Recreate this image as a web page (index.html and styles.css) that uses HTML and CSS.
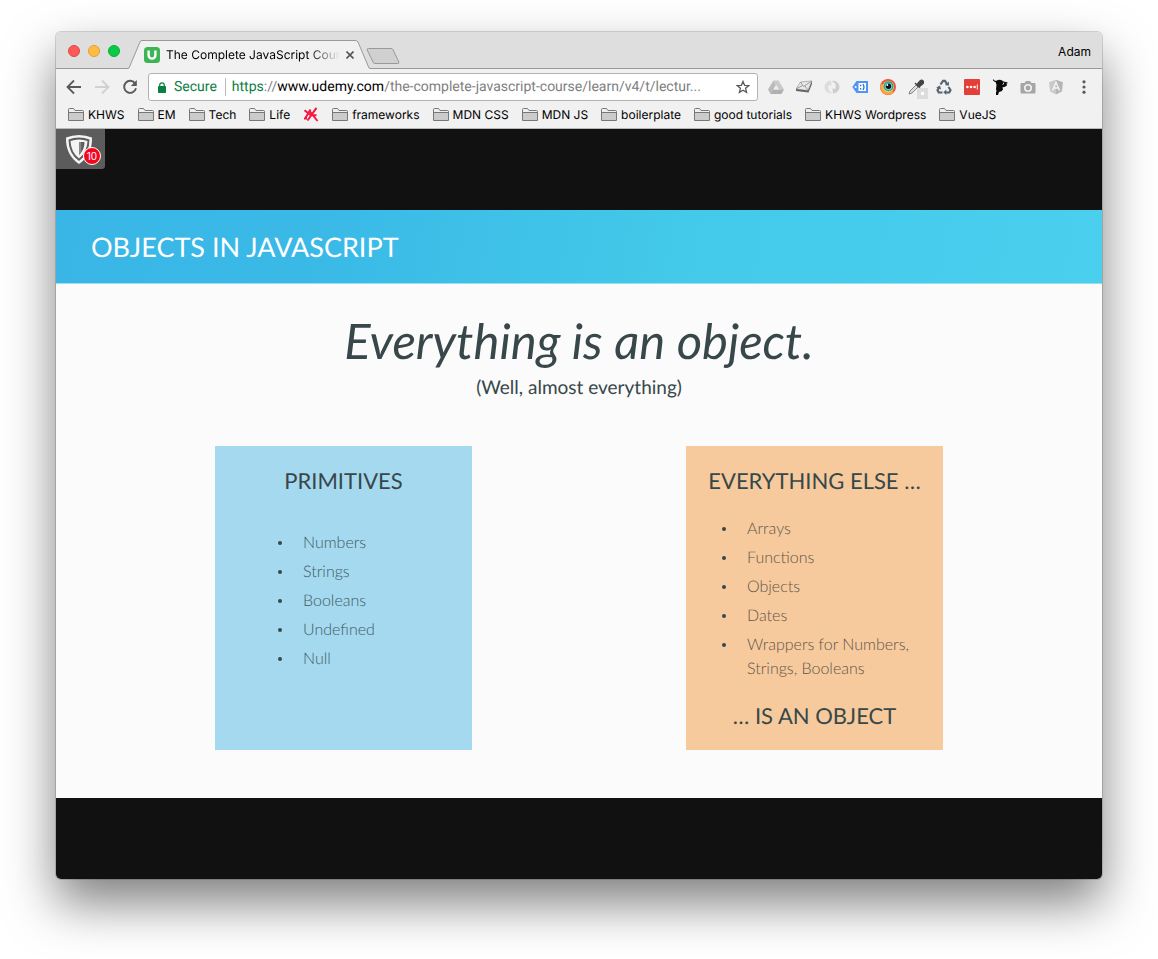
FILE: index.html
```html
<!DOCTYPE html>
<html lang="en">
<head>
<meta charset="utf-8">
<title>The Complete JavaScript Course</title>
<link rel="stylesheet" href="styles.css">
</head>
<body>
<svg class="defs" width="0" height="0" aria-hidden="true">
  <symbol id="folder" viewBox="0 0 16 13">
    <path d="M.5 12.500V1.500q0-1 1-1H5.500l1.500 2h7.500q1 0 1 1v9z" fill="#f0f0f0" stroke="#777"/>
    <path d="M1 5h14v7H1z" fill="#cbcbcb"/>
    <path d="M1 4.500h14" stroke="#777"/>
  </symbol>
</svg>
<div class="window">
  <header class="tabstrip">
    <div class="lights">
      <button class="light red" aria-label="Close window"></button>
      <button class="light amber" aria-label="Minimize window"></button>
      <button class="light green" aria-label="Zoom window"></button>
    </div>
    <div class="tab">
      <svg class="tab-shape" viewBox="0 0 242 29" preserveAspectRatio="none" aria-hidden="true"><path d="M0 28.500L1 28 12 2Q12.500.5 14 .5H227Q229 .5 230 2L241 28l1 .5V29H0z" fill="#f1f1f1"/><path d="M0 28.500L1 28 12 2Q12.500.5 14 .5H227Q229 .5 230 2L241 28l1 .5" fill="none" stroke="#999"/></svg>
      <svg class="favicon" viewBox="0 0 16 16" aria-hidden="true"><rect width="16" height="16" rx="3.500" fill="#3db556"/><path d="M4.600 3.500V8.200a3.400 3.400 0 0 0 6.800 0V3.500" fill="none" stroke="#fff" stroke-width="2.400"/></svg>
      <span class="tab-title">The Complete JavaScript Cour</span>
      <button class="tab-close" aria-label="Close tab"><svg viewBox="0 0 8 8" width="8" height="8"><path d="M.5.5l7 7M7.500.5l-7 7" stroke="#555" stroke-width="1.600"/></svg></button>
    </div>
    <button class="new-tab" aria-label="New tab"><svg viewBox="0 0 34 17" width="34" height="17"><path d="M2.500.5H25q1.500 0 2.200 1.500l5.600 12q.7 1.500-1 1.500H9q-1.500 0-2-1.500L1.200 2Q.6.5 2.500.5z" fill="#d0d0d0" stroke="#999"/></svg></button>
    <button class="profile">Adam</button>
  </header>

  <div class="toolbar">
    <nav class="nav">
      <button aria-label="Back"><svg viewBox="0 0 16 16"><path d="M15 8H2M8 1.500L1.500 8 8 14.500" fill="none" stroke="#5a5a5a" stroke-width="1.800"/></svg></button>
      <button aria-label="Forward"><svg viewBox="0 0 16 16"><path d="M1 8h13M8 1.500L14.500 8 8 14.500" fill="none" stroke="#d0d0d0" stroke-width="1.800"/></svg></button>
      <button aria-label="Reload"><svg viewBox="0 0 16 16"><path d="M13.200 4.500A6 6 0 1 0 14 9.300" fill="none" stroke="#5a5a5a" stroke-width="1.900"/><path d="M14.800 1v6H8.800z" fill="#5a5a5a"/></svg></button>
    </nav>
    <div class="address">
      <svg class="lock" viewBox="0 0 8 11" aria-hidden="true"><rect y="4" width="8" height="7" rx=".8" fill="#0b8043"/><path d="M1.700 4.500V3.200a2.300 2.300 0 0 1 4.600 0v1.300" fill="none" stroke="#0b8043" stroke-width="1.200"/></svg>
      <span class="secure">Secure</span>
      <label class="origin" for="url"><span class="scheme">https</span>://<span class="host">www.udemy.com</span></label>
      <input id="url" class="path" type="text" value="/the-complete-javascript-course/learn/v4/t/lectur...">
      <button class="star" aria-label="Bookmark this page"><svg viewBox="0 0 14 14" width="14" height="14"><path d="M7 1.400l1.600 3.900 4.200.3-3.200 2.700 1 4.100L7 10.200l-3.600 2.200 1-4.100L1.200 5.600l4.200-.3z" fill="none" stroke="#5a5a5a" stroke-width="1.300"/></svg></button>
    </div>
    <div class="extensions">
      <button aria-label="Drive"><svg viewBox="0 0 16 16"><path d="M5.500 1.500h5L16 10.500h-5z" fill="#c9c9c9"/><path d="M5.500 1.500L0 10.500 2.500 15 8 6z" fill="#bbb"/><path d="M5 10.500h11L13.500 15h-11z" fill="#b0b0b0"/><path d="M8 6.500l2.500 4h-5z" fill="#ececec"/></svg></button>
      <button aria-label="Mail checker"><svg viewBox="0 0 16 16"><path d="M4.500 3L16 2 12 11.500 0 10z" fill="#e8e8e8" stroke="#999" stroke-width=".7"/><path d="M4.500 3l3 4.500L16 2M6.500 6.500L0 10M9 7l3 4.500" fill="none" stroke="#888" stroke-width=".8"/><path d="M0 10l12 1.500L16 2v3l-3.500 8.500L0 12z" fill="#666"/></svg></button>
      <button aria-label="Sync"><svg viewBox="0 0 16 16"><path d="M7 1.500C1 2-1.500 8.500 2.500 12.500c2 2 4.500 2 6 1C4 13 3 8.500 5.500 5.500L7.500 7z" fill="#dcdcdc"/><path d="M9 14.500c6-.5 8.500-7 4.500-11-2-2-4.500-2-6-1 4.500.5 5.500 5 3 8L8.500 9z" fill="#cdcdcd"/></svg></button>
      <button aria-label="Tag"><svg viewBox="0 0 16 16"><path d="M4.500 2H16v12H4.500L.3 8z" fill="#4d96f5"/><path d="M6.500 4h7.500v8H6.500z" fill="#fff"/><circle cx="3.700" cy="8" r="1" fill="#fff"/><path d="M8 5.800h1.300v1.500H8zM8 9h1.300v1.500H8z" fill="#2c6fd0"/><path d="M11 5q2 3 0 6" fill="none" stroke="#2c6fd0" stroke-width="1.200"/></svg></button>
      <button aria-label="Eye"><svg viewBox="0 0 16 16"><circle cx="8" cy="8" r="8" fill="#ee5340"/><path d="M.8 4.500A8 8 0 0 0 14 13.200L8 8z" fill="#f9a03c"/><circle cx="8.300" cy="7.600" r="5.800" fill="#f6c571"/><circle cx="8.500" cy="7.300" r="5" fill="#1fa790"/><circle cx="8.500" cy="7.300" r="3.600" fill="#79d6d5"/><circle cx="8.500" cy="7.300" r="2.700" fill="#111"/><circle cx="7.300" cy="6" r=".9" fill="#fff"/></svg></button>
      <button class="picker" aria-label="Color picker"><svg viewBox="0 0 16 16"><path d="M1 15l1-3 6-6 2 2-6 6z" fill="#ddd" stroke="#777" stroke-width=".9"/><path d="M7 4l5 5M9 5.500L12 2q1.800-1.800 3 0t-.5 3L11 8z" fill="#444" stroke="#444" stroke-width="1.400"/></svg><span class="picker-badge"></span></button>
      <button aria-label="Recycle"><svg viewBox="0 0 16 16" fill="none" stroke="#566573" stroke-width="2.200"><path d="M4.500 5.500L7 1.800h2L11 5"/><path d="M12.500 8l2 3-1.200 2.500H9.500"/><path d="M6.500 13.500H2.700L1.500 11 3 8.500"/><path d="M12.900 2.500v4.300L8.800 6zM10.300 10.500v5.500l-3-2.700zM.2 8.600L4 6.500l1.200 4z" fill="#566573" stroke="none"/></svg></button>
      <button aria-label="Password manager"><svg viewBox="0 0 16 16"><rect width="16" height="16" rx="1" fill="#e33e38"/><circle cx="3.400" cy="8" r="1.300" fill="#fff"/><circle cx="7" cy="8" r="1.300" fill="#fff"/><circle cx="10.600" cy="8" r="1.300" fill="#fff"/><path d="M13.300 5.500v5" stroke="#fff"/></svg></button>
      <button aria-label="Ninja"><svg viewBox="0 0 16 16" fill="#0b0b0b"><ellipse cx="7.500" cy="3.700" rx="3.600" ry="3"/><path d="M1 0l1.500 1.500L5 2v1.500L3 3 1 1.500z"/><path d="M10 2.600L15.500 4" stroke="#0b0b0b" stroke-width="1.200"/><path d="M4.500 6h5l2-.5.500-1.500h2.500l.5 2.500-2.500 1.500-2 .3.500 2.200-1.500 1.800-2.500.7L6 16H4v-2.500l.5-1.500-.5-2z"/></svg></button>
      <button aria-label="Screenshot"><svg viewBox="0 0 16 16"><path d="M1.500 4H4.500L6 2h4l1.500 2h3Q15.500 4 15.500 5v8.500q0 1-1 1h-13q-1 0-1-1V5q0-1 1-1z" fill="#a5a5a5"/><circle cx="8" cy="9" r="3.200" fill="none" stroke="#f1f1f1" stroke-width="1.600"/></svg></button>
      <button aria-label="Angular"><svg viewBox="0 0 16 16"><path d="M8 .8l7 2.400-1.100 9.300L8 15.500z" fill="#b5b5b5"/><path d="M8 .8L1 3.200l1.100 9.300L8 15.500z" fill="#c9c9c9"/><path d="M4.500 11.500L8 3.300l3.500 8.200M5.500 9h5" fill="none" stroke="#f3f3f3" stroke-width="1.500"/></svg></button>
      <button aria-label="Menu"><svg viewBox="0 0 16 16" fill="#5a5a5a"><circle cx="8" cy="2.800" r="1.600"/><circle cx="8" cy="8" r="1.600"/><circle cx="8" cy="13.200" r="1.600"/></svg></button>
    </div>
  </div>

  <nav class="bookmarks" aria-label="Bookmarks">
    <a href="#"><svg class="folder"><use href="#folder"/></svg>KHWS</a>
    <a href="#"><svg class="folder"><use href="#folder"/></svg>EM</a>
    <a href="#"><svg class="folder"><use href="#folder"/></svg>Tech</a>
    <a href="#"><svg class="folder"><use href="#folder"/></svg>Life</a>
    <a href="#" aria-label="XX"><svg width="16" height="15" viewBox="0 0 16 15"><path d="M1.500 3.200L7.500 8M7.500 2.500L2 11.800M7 4.500l7.500 9.500M13.500.8L4.500 13.500M8.500 8l5 .3M1 11.500h3" fill="none" stroke="#f5183e" stroke-width="2"/></svg></a>
    <a href="#"><svg class="folder"><use href="#folder"/></svg>frameworks</a>
    <a href="#"><svg class="folder"><use href="#folder"/></svg>MDN CSS</a>
    <a href="#"><svg class="folder"><use href="#folder"/></svg>MDN JS</a>
    <a href="#"><svg class="folder"><use href="#folder"/></svg>boilerplate</a>
    <a href="#"><svg class="folder"><use href="#folder"/></svg>good tutorials</a>
    <a href="#"><svg class="folder"><use href="#folder"/></svg>KHWS Wordpress</a>
    <a href="#"><svg class="folder"><use href="#folder"/></svg>VueJS</a>
  </nav>

  <main class="viewer">
    <button class="shield" aria-label="Blocked trackers">
      <svg viewBox="0 0 28 31" width="28" height="31" aria-hidden="true"><path d="M14 1Q21 1 27 3.500 27.500 21 14 30 .5 21 1 3.500 7 1 14 1z" fill="#f4f4f4"/><path d="M14 3.500q5.500 0 10.500 2Q24.500 19.500 14 27 3.500 19.500 3.500 5.500q5-2 10.500-2z" fill="#5c5c5c"/><path d="M14 5.500q4.500 0 8.500 1.500Q22 18.500 14 24.500 6 18.500 5.500 7 9.500 5.500 14 5.500z" fill="#f4f4f4"/><path d="M14 8h5.500Q19.500 16 14 21z" fill="#5c5c5c"/><path d="M14 8h2.200v10L14 21z" fill="#888"/></svg>
      <span class="count">10</span>
    </button>
    <article class="slide">
      <h1 class="slide-title">OBJECTS IN JAVASCRIPT</h1>
      <p class="statement">Everything is an object.</p>
      <p class="aside">(Well, almost everything)</p>
      <div class="cards">
        <section class="card primitives">
          <h2>PRIMITIVES</h2>
          <ul>
            <li>Numbers</li>
            <li>Strings</li>
            <li>Booleans</li>
            <li>Undefined</li>
            <li>Null</li>
          </ul>
        </section>
        <section class="card others">
          <h2>EVERYTHING ELSE …</h2>
          <ul>
            <li>Arrays</li>
            <li>Functions</li>
            <li>Objects</li>
            <li>Dates</li>
            <li>Wrappers for Numbers, Strings, Booleans</li>
          </ul>
          <p class="closing">… IS AN OBJECT</p>
        </section>
      </div>
    </article>
  </main>
</div>
</body>
</html>
```
FILE: styles.css
```css
* { box-sizing: border-box; }
body {
  margin: 0;
  min-height: 100vh;
  padding: 32px 56px 80px;
  display: flex;
  background: #fff;
  font-family: Inter, Roboto, "Liberation Sans", sans-serif;
  text-rendering: geometricPrecision;
  color: #000;
}
button {
  padding: 0;
  border: 0;
  background: none;
  font: inherit;
  color: inherit;
}
h1, h2, p, ul { margin: 0; padding: 0; font-weight: 400; }
svg { display: block; flex: none; }
.defs { position: absolute; }

.window {
  flex: 1;
  min-width: 0;
  display: flex;
  flex-direction: column;
  border-radius: 5px;
  overflow: hidden;
  background: #f1f1f1;
  box-shadow: 0 0 0 1px rgba(0, 0, 0, .15), 0 24px 50px rgba(0, 0, 0, .5);
}

.tabstrip {
  display: flex;
  align-items: flex-end;
  height: 37px;
  padding: 0 11px 0 12px;
  background: #dedede;
  box-shadow: inset 0 -1px #999;
}
.lights { display: flex; gap: 8px; padding-bottom: 12px; }
.light { width: 12px; height: 12px; border-radius: 50%; }
.red { background: #fc5b57; border: 1px solid #e2463f; }
.amber { background: #febc40; border: 1px solid #e0a032; }
.green { background: #07cb46; border: 1px solid #10ab35; }
.tab {
  position: relative;
  display: flex;
  align-items: center;
  width: 242px;
  height: 29px;
  margin-left: 8px;
  padding: 0 17px 0 16px;
}
.tab-shape { position: absolute; inset: 0; width: 100%; height: 100%; }
.favicon, .tab-title, .tab-close { position: relative; }
.favicon { width: 16px; height: 16px; }
.tab-title {
  flex: 1;
  margin: 0 6px;
  font-size: 12px;
  line-height: 16px;
  white-space: nowrap;
  -webkit-mask-image: linear-gradient(to left, transparent, #000 32px);
  mask-image: linear-gradient(to left, transparent, #000 32px);
}
.new-tab { margin: 0 auto 4px -4px; }
.profile { padding-bottom: 9px; font-size: 12px; line-height: 16px; }

.toolbar {
  display: flex;
  align-items: center;
  height: 36px;
  padding: 0 10px;
  gap: 10px;
}
.nav { display: flex; gap: 12px; }
.nav svg, .extensions svg { width: 16px; height: 16px; }
.address {
  flex: 1;
  min-width: 0;
  display: flex;
  align-items: center;
  height: 28px;
  padding: 0 7px 0 8px;
  border: 1px solid #b3b3b3;
  border-radius: 3px;
  background: #fff;
  font-family: Roboto, "Liberation Sans", sans-serif;
  font-size: 14px;
  line-height: 18px;
}
.lock { width: 8px; height: 11px; margin: 0 8px 0 1px; }
.secure {
  margin-right: 6px;
  padding-right: 8px;
  border-right: 1px solid #bbb;
  color: #0b8043;
}
.origin { color: #808080; }
.scheme { color: #0b8043; }
.host { color: #000; }
.path {
  flex: 1;
  min-width: 0;
  padding: 0;
  border: 0;
  outline: 0;
  background: none;
  font: inherit;
  text-rendering: inherit;
  color: #808080;
}
.extensions { display: flex; gap: 12px; }
.picker { position: relative; }
.picker-badge {
  position: absolute;
  right: -4px;
  bottom: -4px;
  width: 11px;
  height: 11px;
  border: 4px solid #dcdcdc;
  background: #fff;
}

.bookmarks {
  display: flex;
  gap: 13px;
  height: 24px;
  padding: 0 12px 4px;
  border-bottom: 1px solid #b8b8b8;
  font-size: 12px;
  line-height: 18px;
  white-space: nowrap;
}
.bookmarks a {
  display: flex;
  align-items: center;
  gap: 4px;
  color: inherit;
  text-decoration: none;
}
.folder { width: 16px; height: 13px; }

.viewer {
  position: relative;
  flex: 1;
  display: flex;
  flex-direction: column;
  justify-content: center;
  background: #111;
}
.shield {
  position: absolute;
  left: 0;
  top: 0;
  width: 49px;
  height: 40px;
  padding: 4px 9px;
  border-radius: 0 0 3px 0;
  background: #5c5c5c;
}
.count {
  position: absolute;
  right: 4px;
  bottom: 4px;
  width: 18px;
  height: 18px;
  border: 1px solid #fff;
  border-radius: 50%;
  background: #f5041f;
  color: #fff;
  font-size: 10px;
  line-height: 16px;
  text-align: center;
}

.slide {
  padding-bottom: 48px;
  background: #fbfbfb;
  color: #37474a;
  font-family: Lato, "Open Sans", sans-serif;
}
.slide-title {
  padding: 19px 35px 18px;
  border-bottom: 1px solid #9edcf2;
  background: linear-gradient(100deg, #39b6e6, #3ab9e7 25%, #43c9e9 60%, #4acfef);
  color: #fff;
  font-size: 27px;
  line-height: 36px;
}
.statement {
  margin-top: 27px;
  font-size: 49px;
  font-style: italic;
  line-height: 60px;
  text-align: center;
}
.aside {
  margin-top: 5px;
  font-size: 19px;
  line-height: 24px;
  text-align: center;
}
.cards {
  display: flex;
  justify-content: space-between;
  margin-top: 46px;
  padding: 0 159px;
}
.card {
  width: 257px;
  min-height: 304px;
  padding: 21px 20px 18px;
}
.primitives { --item: #3f5b66; background: #a5d9ef; }
.others { --item: #5f564e; background: #f6ca9c; }
.card h2, .closing {
  font-size: 22px;
  line-height: 28px;
  text-align: center;
}
.card ul {
  display: grid;
  gap: 5px;
  list-style: none;
  color: var(--item);
  font-size: 16px;
  font-weight: 300;
  line-height: 24px;
}
.card li { display: flex; }
.card li::before {
  content: "";
  flex: none;
  width: 4px;
  height: 4px;
  margin: 10px 21px 0 0;
  border-radius: 50%;
  background: #37474a;
}
.primitives ul { margin: 36px 0 0 43px; }
.others ul { margin: 22px 0 0 16px; }
.closing { margin-top: 21px; }
```
